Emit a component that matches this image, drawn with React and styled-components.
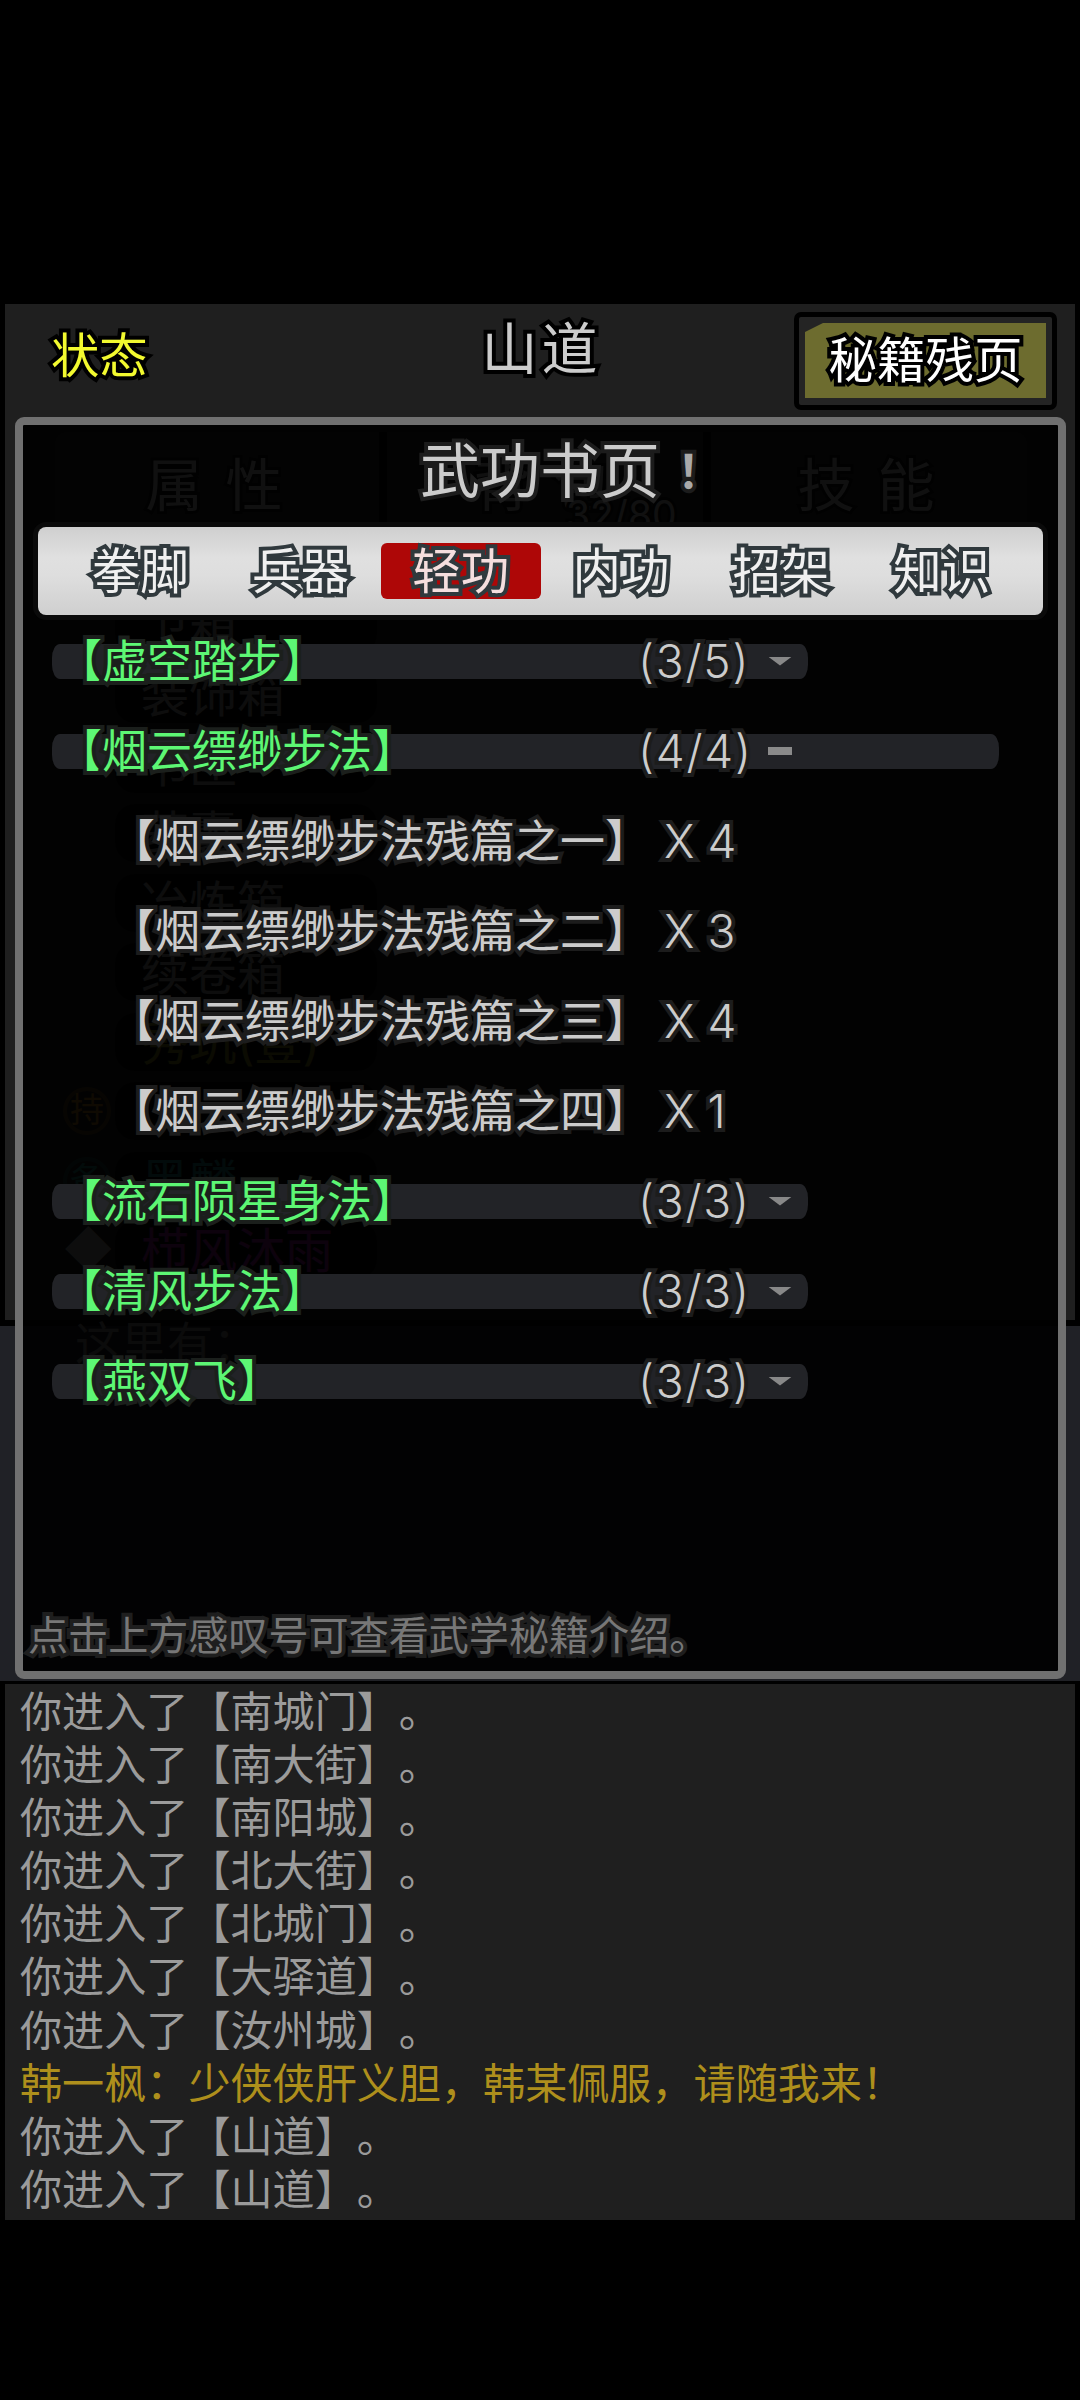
import React, { useState } from 'react';
import styled, { createGlobalStyle, css } from 'styled-components'

const logs = [
    { text: '你进入了【南城门】。' },
    { text: '你进入了【南大街】。' },
    { text: '你进入了【南阳城】。' },
    { text: '你进入了【北大街】。' },
    { text: '你进入了【北城门】。' },
    { text: '你进入了【大驿道】。' },
    { text: '你进入了【汝州城】。' },
    { text: '韩一枫：少侠侠肝义胆，韩某佩服，请随我来！', npc: true },
    { text: '你进入了【山道】。' },
    { text: '你进入了【山道】。' },
];

const bagItems = [
    { name: '卫箱' },
    { name: '装饰箱' },
    { name: '书匣' },
    { name: '药囊' },
    { name: '冶炼箱' },
    { name: '续卷箱' },
    { name: '秀玑(壹)', color: '#8f8a1c' },
    { name: '', badge: '持', badgeColor: '#b87a1c' },
    { name: '黑麟', color: '#1f8a8a', badge: '备', badgeColor: '#1f8a7a' },
    { name: '栉风沐雨', color: '#a81fa8', badge: '◆', plain: true },
];

const tabs = ['拳脚', '兵器', '轻功', '内功', '招架', '知识'];

const skills = [
    { name: '虚空踏步', count: '(3/5)' },
    {
        name: '烟云缥缈步法',
        count: '(4/4)',
        pages: [
            { name: '烟云缥缈步法残篇之一', num: 4 },
            { name: '烟云缥缈步法残篇之二', num: 3 },
            { name: '烟云缥缈步法残篇之三', num: 4 },
            { name: '烟云缥缈步法残篇之四', num: 1 },
        ],
    },
    { name: '流石陨星身法', count: '(3/3)' },
    { name: '清风步法', count: '(3/3)' },
    { name: '燕双飞', count: '(3/3)' },
];

function Skill({ skill, open, onToggle }) {
    return (
        <>
            <SkillRow>
                <Bar $open={open} onClick={onToggle}>
                    <SkillName>【{skill.name}】</SkillName>
                    <Count>{skill.count}</Count>
                    {open ? <Minus /> : <Arrow />}
                </Bar>
            </SkillRow>
            {open && skill.pages && skill.pages.map(page => (
                <PageRow key={page.name}>
                    <PageName>【{page.name}】</PageName>
                    <PageNum>X {page.num}</PageNum>
                </PageRow>
            ))}
        </>
    )
}

function App() {
    const [tab, setTab] = useState('轻功');
    const [opened, setOpened] = useState('烟云缥缈步法');

    return (
        <Screen>
            <GlobalStyle />
            <Room>
                <Header>
                    <Status>状态</Status>
                    <Place>山道</Place>
                    <BookButton>
                        <BookLabel>秘籍残页</BookLabel>
                    </BookButton>
                </Header>
                <BagTabs>
                    <BagTab>属 性</BagTab>
                    <BagTab>背 包<BagSize>32/80</BagSize></BagTab>
                    <BagTab>技 能</BagTab>
                </BagTabs>
                <BagList>
                    {bagItems.map((item, i) => (
                        <BagItem key={i}>
                            <Badge $color={item.badgeColor} $plain={item.plain}>{item.badge}</Badge>
                            <BagName $color={item.color}>{item.name}</BagName>
                        </BagItem>
                    ))}
                </BagList>
            </Room>
            <Scene>这里有：</Scene>
            <Log>
                {logs.map((line, i) => <LogLine key={i} $npc={line.npc}>{line.text}</LogLine>)}
            </Log>

            <Modal>
                <Title>武功书页<Mark>！</Mark></Title>
                <Tabs>
                    {tabs.map(name => (
                        <Tab key={name} $active={name === tab} onClick={() => setTab(name)}>{name}</Tab>
                    ))}
                </Tabs>
                <List>
                    {skills.map(skill => (
                        <Skill
                            key={skill.name}
                            skill={skill}
                            open={opened === skill.name}
                            onToggle={() => setOpened(opened === skill.name ? '' : skill.name)}
                        />
                    ))}
                </List>
                <Hint>点击上方感叹号可查看武学秘籍介绍。</Hint>
            </Modal>
        </Screen>
    )
}

const GlobalStyle = createGlobalStyle`
        body{
                margin:0;
                background:#000;
        }
        *{
                box-sizing:border-box;
        }
`;

const outline = (color, width = 8) => css`
        -webkit-text-stroke:${width}px ${color};
        paint-order:stroke fill;
        stroke-linejoin:round;
`;

const Screen = styled.div`
        position:relative;
        width:1080px;
        height:2400px;
        padding-top:304px;
        overflow:hidden;
        background:#000;
        color:#ccc;
        font-family:Inter, "Noto Sans CJK SC", sans-serif;
        text-spacing-trim:space-all;
        white-space:nowrap;
`;

const Room = styled.div`
        height:1016px;
        margin:0 5px 6px;
        overflow:hidden;
        background:#1f1f1f;
`;

const Header = styled.div`
        display:grid;
        grid-template-columns:250px 1fr 263px;
        align-items:center;
        height:112px;
        padding:0 18px 0 46px;
`;

const Status = styled.span`
        padding-bottom:18px;
        color:#f2f92f;
        font-size:48.3px;
        ${outline('#000')}
`;

const Place = styled.span`
        padding:0 12px 32px 0;
        color:#ccc;
        font-size:56px;
        letter-spacing:4px;
        text-align:center;
        ${outline('#000')}
`;

const BookButton = styled.button`
        height:98px;
        padding:6px;
        border:5px solid #000;
        border-radius:7px;
        background:#242424;
        font:inherit;
`;

const BookLabel = styled.div`
        display:flex;
        align-items:center;
        justify-content:center;
        height:75px;
        padding-bottom:8px;
        background:#6d6c2f;
        clip-path:polygon(18px 0, 100% 0, 100% 100%, 0 100%, 0 9px);
        color:#fff;
        font-size:48.5px;
        ${outline('#000')}
`;

const BagTabs = styled.div`
        display:grid;
        grid-template-columns:repeat(3, 1fr);
        height:120px;
        margin:16px 48px 0 50px;
        border-radius:12px;
        background:#2e2e2e;
`;

const BagTab = styled.div`
        padding:16px 6px 0 0;
        font-size:57px;
        line-height:76px;
        text-align:center;
        word-spacing:7px;
        & + &{
                border-left:8px solid #000;
        }
        ${outline('#111', 6)}
`;

const BagSize = styled.div`
        margin-top:-34px;
        padding-left:179px;
        font-size:39px;
        line-height:50px;
        text-align:left;
`;

const BagList = styled.div`
        display:flex;
        flex-direction:column;
        margin-top:38px;
`;

const BagItem = styled.div`
        display:flex;
        flex:none;
        align-items:center;
        gap:4px;
        height:69.5px;
        padding-left:58px;
`;

const Badge = styled.span`
        width:48px;
        height:48px;
        border-radius:50%;
        font-size:${props => props.$plain ? 48 : 34}px;
        line-height:46px;
        text-align:center;
        color:${props => props.$color || '#aaa'};
        box-shadow:${props => props.$color ? `inset 0 0 0 4px ${props.$color}66` : 'none'};
`;

const BagName = styled.span`
        width:262px;
        height:58px;
        padding-left:26px;
        border-radius:20px;
        background:#0c0c0c;
        color:${props => props.$color || '#aaa'};
        font-size:48px;
        line-height:59px;
`;

const Scene = styled.div`
        height:355px;
        padding-left:75px;
        background:#202126;
        color:#888;
        font-size:46px;
        line-height:34px;
`;

const Log = styled.div`
        height:536px;
        margin:3px 5px 0;
        padding-left:15px;
        background:#1f1f1f;
`;

const LogLine = styled.p`
        margin:0;
        height:53.1px;
        color:${props => props.$npc ? '#ae8f1c' : '#9b9b9b'};
        font-size:42.1px;
        line-height:55px;
`;

// the dialog floats over the room and keeps it faintly visible
const Modal = styled.div`
        position:absolute;
        top:417px;
        left:15px;
        display:flex;
        flex-direction:column;
        width:1051px;
        height:1262px;
        border-radius:9px;
        background:rgba(0, 0, 0, .92);
        background-clip:content-box;
        padding:8px;
        &:before{
                content:"";
                position:absolute;
                inset:0;
                border:8px solid #707070;
                border-radius:9px;
                pointer-events:none;
        }
`;

const Title = styled.div`
        display:flex;
        flex:none;
        height:102px;
        padding-left:397px;
        font-size:60px;
        line-height:93px;
        ${outline('#1c1c1c')}
`;

const Mark = styled.span`
        padding-left:17px;
        color:#aaa;
        font-size:46px;
        font-weight:700;
        line-height:93px;
`;

const Tabs = styled.div`
        display:flex;
        flex:none;
        align-items:center;
        height:88px;
        margin:0 15px;
        padding-left:22px;
        border-radius:8px;
        background:linear-gradient(#cfcfcf, #e0e0e0 35%, #dedede 55%, #cfcfcf);
        box-shadow:0 0 0 5px #0a0a0a;
`;

const Tab = styled.div`
        width:160.3px;
        height:56px;
        border-radius:6px;
        background:${props => props.$active ? '#ae0707' : 'transparent'};
        color:${props => props.$active ? '#f5dede' : '#f0f0f0'};
        font-size:48.5px;
        line-height:57px;
        text-align:center;
        ${outline('#30393d')}
`;

const List = styled.div`
        flex:1;
        padding:1px 0 0 29px;
`;

const SkillRow = styled.div`
        display:flex;
        align-items:center;
        height:90px;
`;

const Bar = styled.div`
        display:grid;
        grid-template-columns:584px 130px 1fr;
        align-items:center;
        width:${props => props.$open ? 947 : 756}px;
        height:35px;
        padding-left:2px;
        border-radius:8px / 14px;
        background:#222327;
        font-size:45px;
        line-height:35px;
        cursor:pointer;
`;

const SkillName = styled.span`
        padding-left:3px;
        color:#5df774;
        ${outline('#1b1f1c')}
`;

const Count = styled.span`
        color:#ccc;
        font-size:46px;
        font-weight:350;
        letter-spacing:1.8px;
        ${outline('#1c1c1c')}
`;

const Arrow = styled.i`
        width:24px;
        height:9px;
        background:#888;
        clip-path:polygon(0 0, 100% 0, 50% 100%);
`;

const Minus = styled.i`
        width:24px;
        height:8px;
        background:#8a8a8a;
`;

const PageRow = styled.div`
        display:grid;
        grid-template-columns:554px 1fr;
        height:90px;
        padding-left:58px;
        font-size:45px;
        line-height:91px;
`;

const PageName = styled.span`
        ${outline('#1c1c1c')}
`;

const PageNum = styled.span`
        font-size:46px;
        font-weight:350;
        ${outline('#1c1c1c')}
`;

const Hint = styled.div`
        height:72px;
        padding-left:5px;
        color:#777;
        font-size:40.1px;
        line-height:73px;
        ${outline('#1e1e1e')}
`;

export default App
